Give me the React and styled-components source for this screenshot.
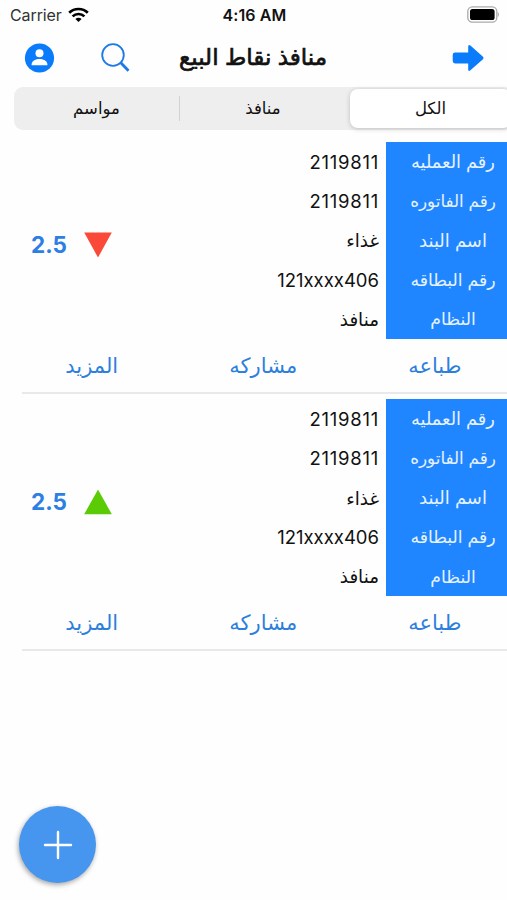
import React from "react";
import styled, { createGlobalStyle } from "styled-components";

const GlobalStyle = createGlobalStyle`
  * {
    box-sizing: border-box;
  }

  body {
    margin: 0;
    background-color: #fefefe;
    color: #111;
    font-family: Inter, "DejaVu Sans", sans-serif;
    overflow: hidden;
  }

  button {
    border: 0;
    padding: 0;
    background: none;
    color: inherit;
    font: inherit;
    cursor: pointer;
  }

  svg {
    display: block;
  }
`;

const Screen = styled.div`
  position: relative;
  width: 507px;
  height: 900px;
  overflow: hidden;
`;

const StatusBar = styled.div`
  display: grid;
  grid-template-columns: 1fr auto 1fr;
  align-items: center;
  height: 29px;
  padding: 0 8px 0 10px;
  font-size: 16px;

  .carrier {
    display: flex;
    align-items: center;
    gap: 6px;
    color: #333;
    letter-spacing: -0.1px;
  }

  .time {
    font-weight: 600;
    letter-spacing: 0.1px;
  }

  .battery {
    justify-self: end;
  }
`;

const StyledHeader = styled.header`
  display: flex;
  align-items: center;
  height: 58px;
  padding: 0 22px 0 24px;

  h1 {
    margin: 0 0 2px 48px;
    flex: 1;
    font-size: 23px;
    font-weight: 400;
    line-height: 30px;
    white-space: nowrap;
    /* A thin outline gives a semibold weight without the wide bold letters */
    -webkit-text-stroke: 0.7px #111;
  }
`;

const IconButton = styled.button`
  margin-left: ${(props) => props.$left || 0}px;
`;

const Tabs = styled.div`
  display: grid;
  grid-template-columns: 164px 170px 161px;
  width: 499px;
  height: 43px;
  margin-left: 14px;
  padding: 2px;
  border-radius: 9px;
  background-color: #eeeeef;
`;

const Tab = styled.button`
  display: flex;
  align-items: center;
  justify-content: center;
  position: relative;
  height: 39px;
  padding-bottom: 1px;
  border-radius: 8px;
  font-size: 16.5px;
  background-color: ${(props) => (props.$active ? "#fff" : "transparent")};
  box-shadow: ${(props) => (props.$active ? "0 1px 5px rgba(0, 0, 0, 0.2)" : "none")};

  /* Separator between two inactive tabs */
  &:first-child::after {
    content: "";
    position: absolute;
    right: 0;
    top: 7px;
    width: 1px;
    height: 25px;
    background-color: #d3d3d5;
  }

  &:first-child {
    padding-right: 3px;
  }

  &:nth-child(2) {
    padding-right: 4px;
  }
`;

const List = styled.main`
  padding-top: 12px;
`;

const StyledCard = styled.section`
  height: 257.3px;
`;

const CardBody = styled.div`
  display: flex;
  height: 197px;
`;

const Amount = styled.div`
  display: flex;
  align-items: center;
  flex: 1;
  gap: 17px;
  padding: 8px 0 0 31px;
  color: #2d7fe3;
  font-size: 22.5px;
  font-weight: 700;
`;

const Column = styled.div`
  display: flex;
  flex-direction: column;
`;

const Values = styled(Column)`
  align-items: flex-end;
  padding-right: 7px;
`;

const Labels = styled(Column)`
  width: 121px;
  align-items: center;
  padding-left: 13px;
  background-color: #2086ff;
  color: #e6f2ff;
`;

const Cell = styled.div`
  display: flex;
  align-items: center;
  height: 39.3px;
  font-size: ${(props) => props.$size || 17.3}px;
  letter-spacing: ${(props) => props.$spacing || 0}px;
  white-space: nowrap;
`;

const Actions = styled.div`
  display: grid;
  grid-template-columns: repeat(3, 171.5px);
  height: 53px;
  padding: 0 0 1px 6px;
  color: #2d7fdc;
  font-size: 21px;
`;

const Divider = styled.hr`
  height: 2px;
  margin: 0 0 0 22px;
  border: 0;
  background-color: #e9e9ea;
`;

const AddButton = styled.button`
  position: absolute;
  left: 19px;
  top: 806px;
  display: flex;
  align-items: center;
  justify-content: center;
  width: 77px;
  height: 77px;
  border-radius: 50%;
  background-color: #4696ef;
  box-shadow: -1px 2px 5px rgba(0, 0, 0, 0.35);
`;

const fields = [
  { label: "رقم العمليه", value: "2119811", size: 18.5, spacing: 0.75, labelSize: 17.8 },
  { label: "رقم الفاتوره", value: "2119811", size: 18.5, spacing: 0.75, labelSize: 16.8 },
  { label: "اسم البند", value: "غذاء", size: 18.3, labelSize: 18 },
  { label: "رقم البطاقه", value: "121xxxx406", size: 18.5 },
  { label: "النظام", value: "منافذ", size: 18.3 },
];

const WifiIcon = () => (
  <svg width="21" height="16" viewBox="0 0 21 16" fill="none" stroke="#000" strokeWidth="2.7">
    <path d="M1.2 5.8C6.4 0.7 14.6 0.7 19.8 5.8" />
    <path d="M4.6 9.4C7.9 6.2 13.1 6.2 16.4 9.4" />
    <path d="M10.5 15L7.4 12C9.1 10.4 11.9 10.4 13.6 12Z" fill="#000" stroke="none" />
  </svg>
);

const BatteryIcon = () => (
  <svg className="battery" width="33" height="17" viewBox="0 0 33 17">
    <rect x="1.8" y="0.8" width="29" height="15.4" rx="4.5" fill="none" stroke="#aaa" strokeWidth="1.3" />
    <rect x="4" y="3" width="24.6" height="11" rx="2.6" fill="#000" />
    <path d="M31.8 6V11C33.3 10.3 33.3 6.7 31.8 6Z" fill="#aaa" />
  </svg>
);

const UserIcon = () => (
  <svg width="31" height="31" viewBox="0 0 31 31">
    <circle cx="15.5" cy="15" r="14.6" fill="#0a7cfb" />
    <circle cx="15.5" cy="10.3" r="4" fill="#fff" />
    <path d="M7.6 22.2C7.2 18.2 10.8 15.9 15.5 15.9C20.2 15.9 23.8 18.2 23.4 22.2Z" fill="#fff" />
  </svg>
);

const SearchIcon = () => (
  <svg width="30" height="30" viewBox="0 0 30 30" fill="none" stroke="#1c79e6">
    <circle cx="12" cy="12" r="10.8" strokeWidth="1.8" />
    <path d="M19.8 19.8L27.5 27.8" strokeWidth="2.8" />
  </svg>
);

const ArrowIcon = () => (
  <svg width="33" height="28" viewBox="0 0 33 28">
    <path
      d="M0.7 11Q0.7 8.6 3.1 8.6H16.2V2.5Q16.2 0 18.4 1.5L31 12.8Q32.2 14 31 15.2L18.4 26.3Q16.2 28 16.2 25.5V19.4H3.1Q0.7 19.4 0.7 17Z"
      fill="#0a7cfb"
    />
  </svg>
);

const TrendIcon = ({ up }) => (
  <svg width="28" height="26" viewBox="0 0 28 26">
    {up ? (
      <path d="M14 0.5L27.8 25.2H0.2Z" fill="#5bcb05" />
    ) : (
      <path d="M0.2 0.6H27.8L14 25.5Z" fill="#fb4939" />
    )}
  </svg>
);

const PlusIcon = () => (
  <svg width="30" height="30" viewBox="0 0 30 30" stroke="#fff" strokeWidth="2.4" strokeLinecap="round">
    <path d="M15 2V28M2 15H28" />
  </svg>
);

const Card = ({ up }) => {
  return (
    <StyledCard>
      <CardBody>
        <Amount>
          <span>2.5</span>
          <TrendIcon up={up} />
        </Amount>
        <Values>
          {fields.map((field) => (
            <Cell key={field.label} $size={field.size} $spacing={field.spacing}>
              {field.value}
            </Cell>
          ))}
        </Values>
        <Labels>
          {fields.map((field) => (
            <Cell key={field.label} dir="rtl" $size={field.labelSize}>
              {field.label}
            </Cell>
          ))}
        </Labels>
      </CardBody>
      <Actions>
        <button>المزيد</button>
        <button>مشاركه</button>
        <button>طباعه</button>
      </Actions>
      <Divider />
    </StyledCard>
  );
};

const App = () => {
  return (
    <Screen>
      <GlobalStyle />
      <StatusBar>
        <div className="carrier">
          Carrier
          <WifiIcon />
        </div>
        <div className="time">4:16 AM</div>
        <BatteryIcon />
      </StatusBar>
      <StyledHeader>
        <IconButton>
          <UserIcon />
        </IconButton>
        <IconButton $left={46}>
          <SearchIcon />
        </IconButton>
        <h1>منافذ نقاط البيع</h1>
        <IconButton>
          <ArrowIcon />
        </IconButton>
      </StyledHeader>
      <Tabs>
        <Tab>مواسم</Tab>
        <Tab>منافذ</Tab>
        <Tab $active>الكل</Tab>
      </Tabs>
      <List>
        <Card />
        <Card up />
      </List>
      <AddButton>
        <PlusIcon />
      </AddButton>
    </Screen>
  );
};

export default App;
